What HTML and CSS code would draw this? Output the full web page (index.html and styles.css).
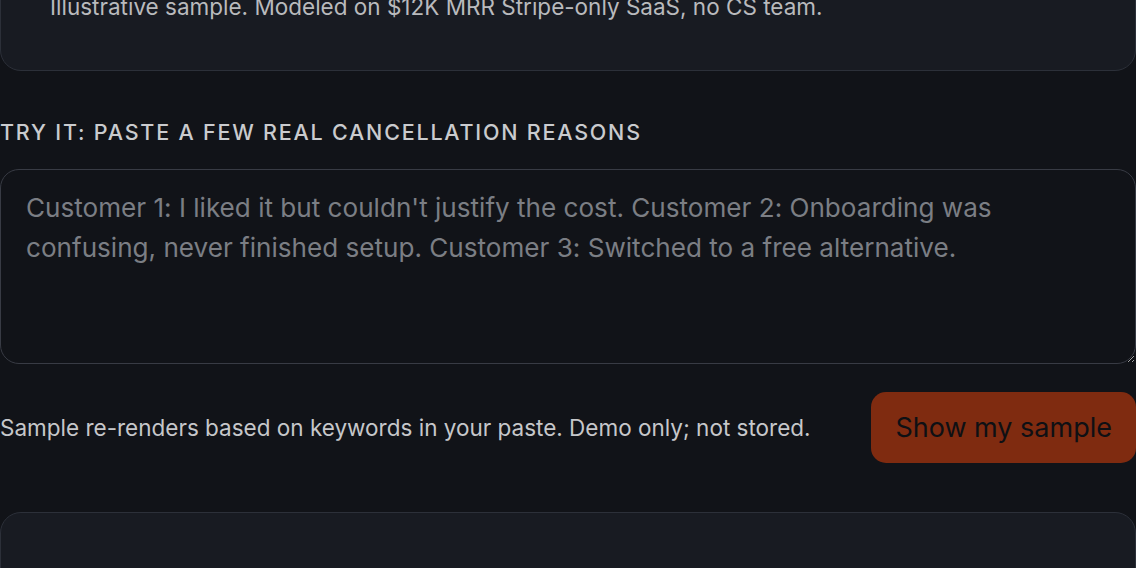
FILE: index.html
```html
<!DOCTYPE html>
<html lang="en">
  <head>
    <meta charset="UTF-8" />
    <meta name="viewport" content="width=device-width, initial-scale=1.0" />
    <title>Churn reasons sample</title>
    <link rel="stylesheet" href="styles.css">
  </head>
  <body>
    <main class="page">
      <section class="card sample-card">
        <p class="note">Illustrative sample. Modeled on $12K MRR Stripe-only SaaS, no CS team.</p>
      </section>

      <form class="try-form">
        <label class="try-label" for="reasons">Try it: paste a few real cancellation reasons</label>
        <textarea id="reasons" class="reasons" placeholder="Customer 1: I liked it but couldn't justify the cost. Customer 2: Onboarding was confusing, never finished setup. Customer 3: Switched to a free alternative."></textarea>
        <div class="form-row">
          <p class="hint">Sample re-renders based on keywords in your paste. Demo only; not stored.</p>
          <button type="button" class="btn">Show my sample</button>
        </div>
      </form>

      <section class="card result-card"></section>
    </main>
  </body>
</html>
```

FILE: styles.css
```css
body {
  margin: 0;
  padding: 0;
  background-color: #111318;
  color: #c9cacd;
  font-family: Inter, "Noto Sans", sans-serif;
  font-feature-settings: "calt" 0;
  overflow: hidden;
}

.page {
  /* page is scrolled down a bit in the shot */
  margin-top: -58px;
}

.card {
  background-color: #181b22;
  border: 1px solid #2c3039;
  border-radius: 21px;
}

.sample-card {
  padding: 47px 49px 46px;
}

.note {
  margin: 0;
  font-size: 22.5px;
  line-height: 33.6px;
  color: #b9babd;
}

.try-form {
  margin-top: 46px;
}

.try-label {
  display: block;
  font-size: 21.5px;
  line-height: 31px;
  letter-spacing: 0.083em;
  text-transform: uppercase;
  color: #cacbce;
  font-weight: 500;
}

.reasons {
  display: block;
  width: 100%;
  height: 195px;
  margin-top: 21px;
  padding: 18px 25px;
  box-sizing: border-box;
  background-color: #111318;
  border: 1px solid #383b44;
  border-radius: 19px;
  color: #d0d1d4;
  font-family: Inter, "Noto Sans", sans-serif;
  font-feature-settings: "calt" 0;
  font-size: 26.1px;
  line-height: 40px;
  resize: vertical;
  outline: none;
}

.reasons::placeholder {
  color: #7b7e84;
}

.form-row {
  display: flex;
  justify-content: space-between;
  align-items: center;
  margin-top: 28px;
}

.hint {
  margin: 0;
  font-size: 22.5px;
  line-height: 33px;
  color: #c6c7ca;
}

.btn {
  padding: 16px 24px;
  background-color: #7f2b10;
  color: #0e1014;
  border: none;
  border-radius: 15px;
  font-family: Inter, "Noto Sans", sans-serif;
  font-size: 27px;
  line-height: 39px;
  cursor: pointer;
}

.result-card {
  margin-top: 49px;
  height: 300px;
}
```
